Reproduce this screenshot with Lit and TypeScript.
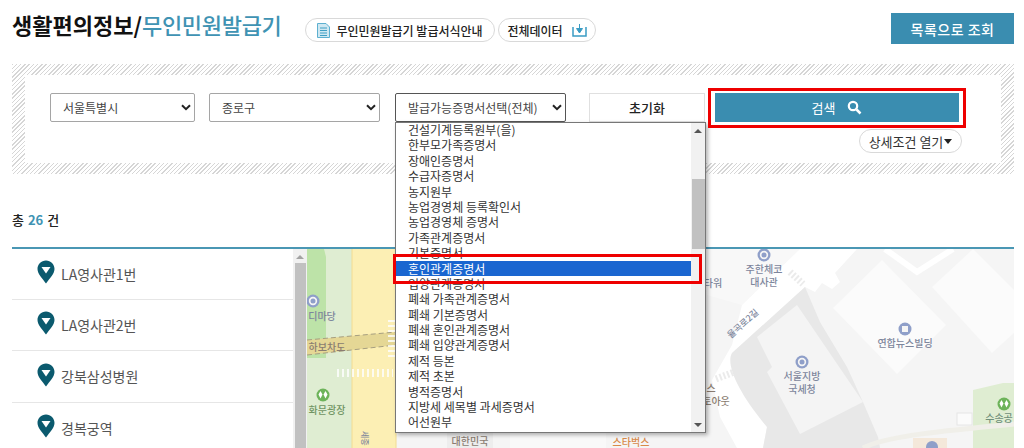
import { LitElement, html, css, svg } from "lit";
import { customElement } from "lit/decorators.js";

const ROWS = ["LA영사관1번", "LA영사관2번", "강북삼성병원", "경복궁역"];
const OPTIONS = [
  "건설기계등록원부(을)", "한부모가족증명서", "장애인증명서", "수급자증명서", "농지원부",
  "농업경영체 등록확인서", "농업경영체 증명서", "가족관계증명서", "기본증명서", "혼인관계증명서",
  "입양관계증명서", "폐쇄 가족관계증명서", "폐쇄 기본증명서", "폐쇄 혼인관계증명서", "폐쇄 입양관계증명서",
  "제적 등본", "제적 초본", "병적증명서", "지방세 세목별 과세증명서", "어선원부",
];

const chevron = html`<svg class="chev" width="10" height="7" viewBox="0 0 10 7"><path d="M1 1.2 5 5.2 9 1.2" fill="none" stroke="#222" stroke-width="2"/></svg>`;

const pin = html`<svg class="pin" width="18" height="24" viewBox="0 0 18 24"><path d="M9 0.5C4.2 0.5 0.5 4.2 0.5 9c0 5 5 9.5 8.5 14.5C12.500 18.500 17.500 14 17.500 9 17.500 4.200 13.800 0.500 9 0.500Z" fill="#0b5a6e"/><path d="M4.500 7h9L9 13.500Z" fill="#fff"/></svg>`;

const poi = (x: number, y: number, c = "#8f9fc9") => svg`<circle cx=${x} cy=${y} r="6.5" fill=${c}/><circle cx=${x} cy=${y} r="4.2" fill="#f5f5f5"/><circle cx=${x} cy=${y} r="2.5" fill=${c}/>`;
const green = (x: number, y: number) => svg`<circle cx=${x} cy=${y} r="6.5" fill="#6db35a"/><path d="M${x - 2.5} ${y + 3.5}l-2-4 2-3.500 2 3.500zM${x + 2.5} ${y + 3.5}l-2-4 2-3.500 2 3.500z" fill="#fff"/>`;

@customElement("app-root")
export class AppRoot extends LitElement {
  static styles = css`
    :host {
      display: block;
      position: relative;
      width: 1024px;
      height: 448px;
      overflow: hidden;
      background: #fff;
      font-family: "Noto Sans CJK KR", "Noto Sans", sans-serif;
      color: #222;
    }
    .page { padding: 0 10px 0 12px; display: flex; flex-direction: column; }
    .head { height: 64px; display: flex; align-items: flex-start; }
    .title { margin: 9px 0 0 0; font-size: 22px; line-height: 30px; font-weight: 700; color: #111; width: 293px; flex: none; white-space: nowrap; }
    .title span { color: #3f93b3; font-weight: 500; letter-spacing: -0.3px; }
    .pill { height: 22px; margin-top: 18px; border: 1px solid #d9d9d9; border-radius: 13px; display: inline-flex; align-items: center; justify-content: center; gap: 6px; font-size: 12px; font-weight: 500; color: #222; background: #fff; box-sizing: content-box; white-space: nowrap; }
    .pill.one { width: 188px; }
    .pill.two { width: 96px; margin-left: 3px; gap: 9px; }
    .spacer { flex: 1; }
    .list-btn { width: 123px; height: 31px; margin-top: 13px; background: #3a8db0; color: #fff; font-size: 14px; font-weight: 500; display: flex; align-items: center; justify-content: center; letter-spacing: 0.5px; }
    .search {
      height: 110px;
      padding: 11px 13px 11px 13px;
      box-sizing: border-box;
      background: repeating-linear-gradient(135deg, #d6d6d6 0 1px, #fff 1px 3px);
    }
    .search-in { height: 88px; background: #fff; box-sizing: border-box; padding: 18px 0 0 25px; display: flex; align-items: flex-start; }
    .sel { height: 29px; box-sizing: border-box; border: 1px solid #a5a5a5; border-radius: 2px; background: #fff; display: flex; align-items: center; justify-content: space-between; padding: 0 3px 0 12px; font-size: 12px; color: #444; white-space: nowrap; }
    .sel.a { width: 145px; margin-right: 14px; }
    .sel.b { width: 171px; margin-right: 15px; }
    .sel.c { width: 171px; margin-right: 23px; border-color: #555; }
    .reset { width: 116px; height: 29px; box-sizing: border-box; border: 1px solid #e0e0e0; background: #fff; font-size: 13px; font-weight: 500; color: #222; display: flex; align-items: center; justify-content: center; margin-right: 10px; }
    .right { width: 244px; display: flex; flex-direction: column; align-items: flex-end; }
    .go { width: 244px; height: 29px; background: #3a8db0; color: #fff; font-size: 13px; display: flex; align-items: center; justify-content: center; gap: 12px; }
    .more { margin-top: 7px; margin-right: -3px; height: 24px; width: 103px; box-sizing: border-box; border: 1px solid #d9d9d9; border-radius: 12px; font-size: 13px; color: #333; display: flex; align-items: center; justify-content: center; white-space: nowrap; }
    .more i { display: block; width: 0; height: 0; border: 4px solid transparent; border-top: 5px solid #222; border-bottom: 0; margin-left: 1px; }
    .total { height: 75px; box-sizing: border-box; padding-top: 36px; font-size: 13px; line-height: 20px; font-weight: 500; color: #222; border-bottom: 2px solid #4a97b4; white-space: nowrap; }
    .total b { color: #3f93b3; font-weight: 700; margin: 0 1px; }
    .main { display: flex; height: 199px; overflow: hidden; }
    .list { width: 281px; flex: none; }
    .row { height: 51px; box-sizing: border-box; border-bottom: 1px solid #e6e6e6; display: flex; align-items: center; padding: 0 0 1px 25px; gap: 6px; font-size: 14px; color: #555; margin-bottom: 0.3px; }
    .row .pin { margin-top: -3px; }
    .row:last-child { border-bottom: 0; }
    .track { width: 14px; flex: none; background: #f1f1f1; position: relative; }
    .track::before { content: ""; position: absolute; left: 2px; right: 1px; top: 14px; bottom: 0; background: #c1c1c1; }
    .arrow-up { position: absolute; left: 3px; top: 6px; width: 0; height: 0; border: 4px solid transparent; border-bottom: 4px solid #a3a3a3; border-top: 0; }
    .map { flex: 1; min-width: 0; position: relative; background: #f5f5f5; }
    .map svg { display: block; }
    .map text { font-family: "Noto Sans CJK KR", sans-serif; font-size: 10px; font-weight: 500; fill: #7d869c; text-anchor: middle; }
    .map text.g { fill: #6f9463; }
    .map text.o { fill: #d98a4a; }
    .map text.b { fill: #8a7c70; }
    .map text.small { font-size: 8px; text-anchor: start; }
    .map text.road { font-size: 9px; }
    .map text.teal { fill: #6f8f7a; }
    .dropdown { position: absolute; left: 395px; top: 122px; width: 311px; height: 311px; box-sizing: border-box; border: 1px solid #777; background: #fff; box-shadow: 2px 2px 4px rgba(0,0,0,.3); overflow: hidden; display: flex; }
    .opts { flex: 1; min-width: 0; margin-top: -1px; }
    .opt { height: 15.4px; line-height: 15.4px; padding-left: 12px; font-size: 12px; color: #333; white-space: nowrap; }
    .opt.on { background: #1a66d0; color: #fff; }
    .dtrack { width: 14px; flex: none; background: #f1f1f1; position: relative; }
    .dthumb { position: absolute; left: 1px; right: 0; top: 56px; height: 70px; background: #c1c1c1; }
    .dup, .ddown { position: absolute; left: 3px; width: 0; height: 0; border: 4px solid transparent; }
    .dup { top: 6px; border-bottom: 4px solid #555; border-top: 0; }
    .ddown { bottom: 5px; border-top: 4px solid #555; border-bottom: 0; }
    .redbox { position: absolute; box-sizing: border-box; border: 3px solid #ee0000; pointer-events: none; }
    .red1 { left: 708px; top: 88px; width: 258px; height: 40px; }
    .red2 { left: 393px; top: 254px; width: 309px; height: 30px; }
  `;

  render() {
    return html`
      <div class="page">
        <div class="head">
          <h1 class="title">생활편의정보/<span>무인민원발급기</span></h1>
          <div class="pill one">
            <svg width="13" height="15" viewBox="0 0 13 15"><path d="M0.5 0.5h8.500l3.500 3.500v10.500H0.5Z" fill="#cfe8f2" stroke="#5db0d0"/><path d="M3 5h7M3 7.500h7M3 10h7M3 12.500h7" stroke="#3f9fc4"/></svg>
            무인민원발급기 발급서식안내
          </div>
          <div class="pill two">
            전체데이터
            <svg width="15" height="14" viewBox="0 0 15 14"><path d="M1 4v9h13V4" fill="none" stroke="#3a9cc4" stroke-width="1.5"/><path d="M7.500 1v7M4.500 5.500h6L7.500 10Z" fill="#3a9cc4" stroke="#3a9cc4"/></svg>
          </div>
          <div class="spacer"></div>
          <div class="list-btn">목록으로 조회</div>
        </div>

        <div class="search">
          <div class="search-in">
            <div class="sel a">서울특별시 ${chevron}</div>
            <div class="sel b">종로구 ${chevron}</div>
            <div class="sel c">발급가능증명서선택(전체) ${chevron}</div>
            <div class="reset">초기화</div>
            <div class="right">
              <div class="go">검색
                <svg width="15" height="15" viewBox="0 0 15 15"><circle cx="6" cy="6" r="4.2" fill="none" stroke="#fff" stroke-width="2.2"/><path d="M9.500 9.500 13.500 13.500" stroke="#fff" stroke-width="2.5"/></svg>
              </div>
              <div class="more">상세조건 열기<i></i></div>
            </div>
          </div>
        </div>

        <div class="total">총 <b>26</b> 건</div>

        <div class="main">
          <div class="list">
            ${ROWS.map((r) => html`<div class="row">${pin}<span>${r}</span></div>`)}
          </div>
          <div class="track"><span class="arrow-up"></span></div>
          <div class="map">
            <svg width="707" height="199" viewBox="307 249 707 199">
              <rect x="307" y="249" width="707" height="199" fill="#f5f5f5"/>
              <rect x="307" y="249" width="45" height="199" fill="#dfedd2"/>
              <path d="M307 249h17l2 8v101h-19Z" fill="#bde3a8"/>
              <rect x="352" y="249" width="44" height="199" fill="#fcefb4"/>
              <path d="M352 249v199M396 249v199" stroke="#f2dc92" fill="none"/>
              <path d="M307 340l89-8v13l-89 10Z" fill="#e5d795"/>
              <path d="M307 340l89-8M307 355l89-10" stroke="#a79f80" stroke-dasharray="5 3" fill="none"/>
              <path d="M337 373h56" stroke="#fff" stroke-width="8" stroke-dasharray="2 3" opacity=".8"/>
              <path d="M392 320v38" stroke="#fff" stroke-width="8" stroke-dasharray="2 3" opacity=".8"/>
              ${poi(313, 301)}
              <text x="322" y="320">디마당</text>
              <text x="327" y="351" class="b">하보차도</text>
              ${green(323, 395)}
              <text x="327" y="414" class="g">화문광장</text>
              <text x="362" y="431" transform="rotate(90 362 431)" class="small">세종</text>

              <!-- street below the popup -->
              <rect x="510" y="433" width="96" height="15" fill="#f9f9f9"/>
              <rect x="447" y="433" width="46" height="15" fill="#ededed"/>
              <text x="470" y="445" class="b">대한민국</text>
              <text x="631" y="446" class="o">스타벅스</text>

              <!-- roads and buildings, right part of the map -->
              <path d="M707 295 L742 305 L800 249 L705 249Z" fill="#f8f8f8"/>
              <path d="M742 305 L800 249 H857 L835 273 L840 282 L832 289 L822 283 L815 292 L805 287 L732 353 L748 390 L767 427 L763 448 H737 L720 417 L712 380 L732 345Z" fill="#fff"/>
              <path d="M885 249 L917 272 L953 249" fill="none" stroke="#fff" stroke-width="6"/>
              <path d="M805 287 L732 353 C725 365 740 395 767 427 L763 448 H880 L878 437 L863 402 L847 367 L820 322Z" fill="#e8e8e8"/>
              <path d="M757 337 L797 305 L863 402 L800 434 L767 372 L772 367Z" fill="#f4f4f4"/>
              <path d="M833 308 L882 260 L946 325 L897 374Z" fill="#fbfbfb"/>
              <path d="M932 287 L973 249 L1014 290 V333 L992 353Z" fill="#fbfbfb"/>
              <path d="M973 390 L1003 383 H1014 V448 H973Z" fill="#dfedd2"/>
              <path d="M863 448 C885 436 950 430 1014 424" stroke="#f0efe9" stroke-width="5" fill="none"/>
              <rect x="957" y="413" width="15" height="12" fill="#fbfbfb" stroke="#e6e6e6"/>
              <rect x="913" y="438" width="34" height="10" fill="#f4e8da"/>
              <circle cx="932" cy="447" r="6" fill="#8f9fc9"/>
              <path d="M790 272l13 12" stroke="#ebebeb" stroke-width="7" stroke-dasharray="2 2" fill="none"/>
              <path d="M716 379l18-7" stroke="#ebebeb" stroke-width="7" stroke-dasharray="2 2" fill="none"/>
              ${poi(764, 255)}
              <text x="764" y="273">주한체코</text>
              <text x="764" y="286">대사관</text>
              <text x="713" y="287">타워</text>
              <text x="745" y="326" transform="rotate(-42 745 326)" class="road">율곡로2길</text>
              ${poi(802, 362)}
              <text x="802" y="380">서울지방</text>
              <text x="802" y="393">국세청</text>
              <circle cx="905" cy="329" r="6.5" fill="#8f9fc9"/><rect x="902" y="326" width="6" height="6" fill="#f5f5f5"/>
              <text x="905" y="347">연합뉴스빌딩</text>
              ${green(1004, 404)}
              <text x="999" y="422" class="g teal">수송공</text>
              <text x="711" y="392" class="b">스</text>
              <text x="716" y="405" class="b">토아웃</text>
            </svg>
          </div>
        </div>
      </div>

      <div class="dropdown">
        <div class="opts">
          ${OPTIONS.map((o, i) => html`<div class="opt ${i === 9 ? "on" : ""}">${o}</div>`)}
        </div>
        <div class="dtrack"><span class="dup"></span><span class="dthumb"></span><span class="ddown"></span></div>
      </div>
      <div class="redbox red1"></div>
      <div class="redbox red2"></div>
    `;
  }
}
